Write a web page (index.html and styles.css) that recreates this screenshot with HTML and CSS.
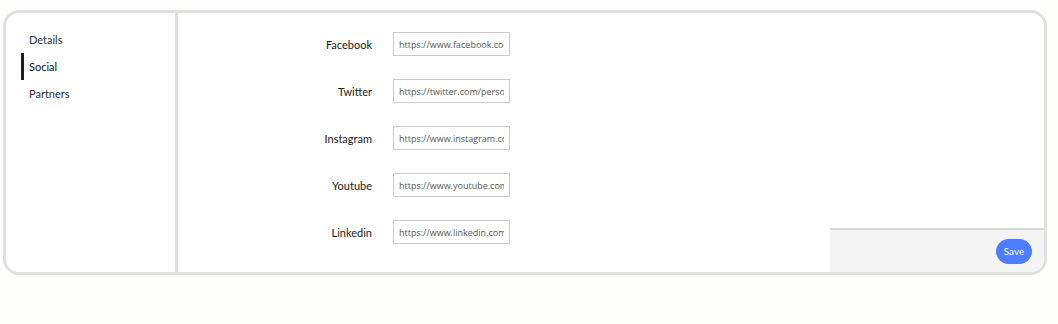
FILE: index.html
```html
<!DOCTYPE html>
<html lang="en">
<head>
  <meta charset="UTF-8" />
  <meta name="viewport" content="width=device-width, initial-scale=1.0"/>
  <title>Social settings</title>
  <link rel="stylesheet" href="styles.css">
</head>
<body>
  <div class="card">
    <nav class="sidebar">
      <a class="nav-item">Details</a>
      <a class="nav-item active">Social</a>
      <a class="nav-item">Partners</a>
    </nav>

    <main class="content">
      <form class="social-form">
        <label class="field-label" for="fb">Facebook</label>
        <input class="field-input" id="fb" type="text" placeholder="https://www.facebook.com/person">

        <label class="field-label" for="tw">Twitter</label>
        <input class="field-input" id="tw" type="text" placeholder="https://twitter.com/person">

        <label class="field-label" for="ig">Instagram</label>
        <input class="field-input" id="ig" type="text" placeholder="https://www.instagram.com/person">

        <label class="field-label" for="yt">Youtube</label>
        <input class="field-input" id="yt" type="text" placeholder="https://www.youtube.com/person">

        <label class="field-label" for="li">Linkedin</label>
        <input class="field-input" id="li" type="text" placeholder="https://www.linkedin.com/person">
      </form>

      <div class="actions">
        <button class="save-button" type="button">Save</button>
      </div>
    </main>
  </div>
</body>
</html>
```

FILE: styles.css
```css
* { margin: 0; padding: 0; box-sizing: border-box; }
body {
  font-family: Lato, "Liberation Sans", sans-serif;
  background: #fdfdfc;
  color: #222;
  padding: 10px 11px 0 3px;
}

.card {
  display: flex;
  height: 265px;
  border: 3px solid #e0e0e0;
  border-radius: 16px;
  background: #fff;
  overflow: hidden;
}

.sidebar {
  width: 172px;
  flex-shrink: 0;
  border-right: 3px solid #dcdee4;
  padding: 13px 0 0 15px;
  display: flex;
  flex-direction: column;
}
.nav-item {
  height: 27px;
  line-height: 27px;
  font-size: 11px;
  color: #2b2d3a;
  padding-left: 5px;
  border-left: 3px solid transparent;
  cursor: pointer;
}
.nav-item.active {
  border-left-color: #1e1f22;
  color: #111;
}

.content {
  flex: 1;
  position: relative;
  padding-top: 19px;
}

.social-form {
  display: grid;
  grid-template-columns: 194px 117px;
  column-gap: 21px;
  row-gap: 23px;
  align-items: center;
}
.field-label {
  text-align: right;
  font-size: 11px;
  color: #1a1a1a;
}
.field-input {
  height: 24px;
  width: 117px;
  border: 1px solid #cacaca;
  padding: 0 5px;
  font-family: "Open Sans", "Liberation Sans", sans-serif;
  font-size: 9px;
  color: #555;
  background: #fff;
  outline: none;
}
.field-input::placeholder { color: #555; opacity: 1; }

.actions {
  position: absolute;
  right: 0;
  bottom: 0;
  width: 214px;
  height: 44px;
  background: #f4f4f5;
  border-top: 2px solid #d6d6d6;
  display: flex;
  align-items: center;
  justify-content: flex-end;
  padding-right: 12px;
}
.save-button {
  width: 36px;
  height: 25px;
  border: none;
  border-radius: 13px;
  background: #4e7dff;
  color: #fff;
  font-family: Lato, "Liberation Sans", sans-serif;
  font-size: 10px;
  cursor: pointer;
}
```
